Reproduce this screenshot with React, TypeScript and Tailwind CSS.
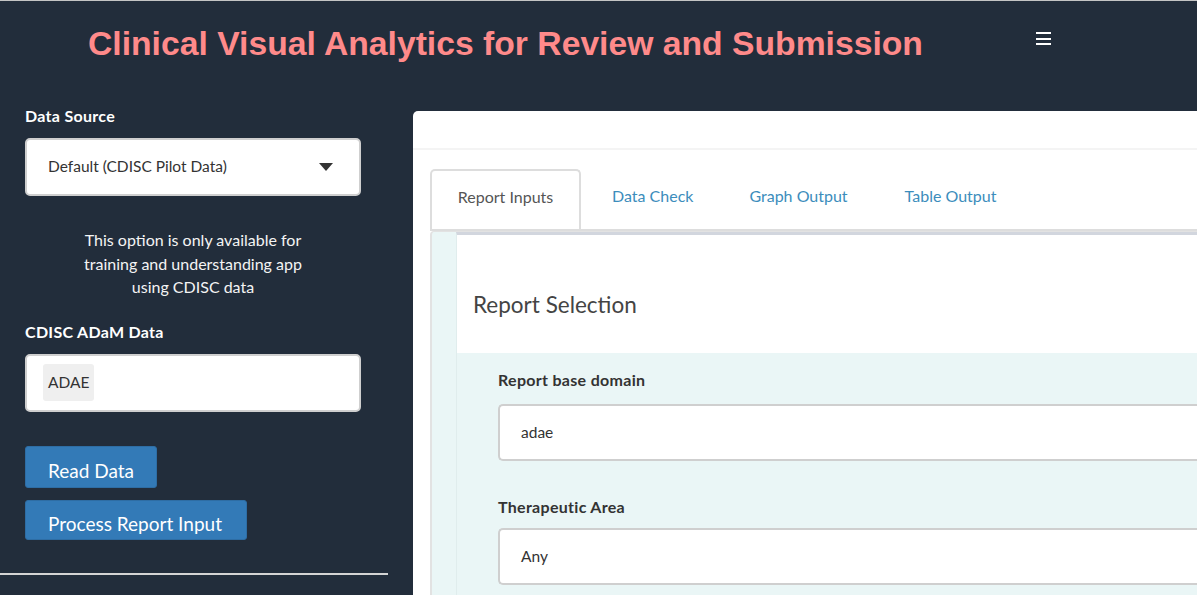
import React from "react";

const sans = "font-['Lato','Noto_Sans',sans-serif]";

export default function App() {
  return (
    <div className={`w-[1197px] h-[595px] overflow-hidden bg-[#222d3b] border-t border-[#c4c4c4] ${sans}`}>
      {/* Header */}
      <div className="h-[89px] flex">
        <div className="w-[1036px] pl-[88px] pt-[22px]">
          <h1 className="font-['Liberation_Sans','Arial',sans-serif] font-bold text-[33.7px] leading-[40px] text-[#ff8a8a] whitespace-nowrap">
            Clinical Visual Analytics for Review and Submission
          </h1>
        </div>
        <div className="pt-[31px] flex flex-col gap-[3.5px]">
          <div className="h-[2px] w-[15px] bg-white" />
          <div className="h-[2px] w-[15px] bg-white" />
          <div className="h-[2px] w-[15px] bg-white" />
        </div>
      </div>

      {/* Body */}
      <div className="flex">
        {/* Sidebar */}
        <div className="w-[388px] shrink-0 flex flex-col">
          <div className="px-[25px] pt-[16px]">
            <div className="text-white font-bold text-[16px] tracking-[0.3px] leading-[20px]">Data Source</div>
            <div className="mt-[12px] h-[58px] w-[336px] bg-white rounded-[5px] border-2 border-[#cfcfcf] flex items-center justify-between pl-[21px] pr-[26px]">
              <span className="text-[15.5px] text-[#333]">Default (CDISC Pilot Data)</span>
              <svg width="14" height="8" viewBox="0 0 14 8">
                <path d="M0 0 L14 0 L7 8 Z" fill="#333" />
              </svg>
            </div>
            <div className="mt-[32px] w-[336px] text-center text-[16px] leading-[23.5px] text-[#f4f4f4]">
              This option is only available for
              <br />
              training and understanding app
              <br />
              using CDISC data
            </div>
            <div className="mt-[23px] text-white font-bold text-[16px] tracking-[0.3px] leading-[20px]">CDISC ADaM Data</div>
            <div className="mt-[12px] h-[58px] w-[336px] bg-white rounded-[5px] border-2 border-[#cfcfcf] flex items-center pl-[16px]">
              <span className="h-[37px] px-[5px] flex items-center bg-[#efefef] rounded-[3px] text-[15.5px] text-[#333]">ADAE</span>
            </div>
            <button className="mt-[34px] block h-[42px] w-[132px] bg-[#337ab7] border border-[#2e6da4] rounded-[3px] text-white text-[19px] text-left pl-[22px] pt-[10px]">
              Read Data
            </button>
            <button className="mt-[12px] block h-[40px] w-[222px] bg-[#337ab7] border border-[#2e6da4] rounded-[3px] text-white text-[19px] text-left pl-[22px] pt-[9px]">
              Process Report Input
            </button>
          </div>
          <div className="mt-[33px] h-[2px] w-[388px] bg-[#d4d4d4]" />
        </div>

        {/* Main */}
        <div className="flex-1 pl-[25px] pt-[21px]">
          <div className="bg-white rounded-tl-[5px] h-[500px]">
            <div className="h-[39px] border-b-2 border-[#f4f4f4]" />
            <div className="pl-[17px] pt-[19px]">
              {/* Tabs */}
              <div className="flex items-end border-b-2 border-[#dddddd]">
                <div className="h-[60px] w-[151px] pb-[6px] border-2 border-b-0 border-[#dddddd] rounded-t-[5px] flex items-center justify-center text-[16px] text-[#555]">
                  Report Inputs
                </div>
                <div className="h-[60px] pb-[6px] pl-[31px] pr-[28px] flex items-center text-[16px] text-[#3c8dbc]">Data Check</div>
                <div className="h-[60px] pb-[6px] px-[28px] flex items-center text-[16px] text-[#3c8dbc]">Graph Output</div>
                <div className="h-[60px] pb-[6px] pl-[29px] pr-[28px] flex items-center text-[16px] text-[#3c8dbc]">Table Output</div>
              </div>
              {/* Tab content */}
              <div className="bg-[#eaf6f6] border-l-2 border-t border-[#e2e2e2] rounded-tl-[4px] pl-[24px] h-[400px]">
                <div className="border-l border-[#e0eded] border-t-[3px] border-t-[#d2d6de] h-full">
                  <div className="bg-white h-[118px] pl-[16px] pt-[56px]">
                    <div className="text-[22.5px] leading-[28px] text-[#444]">Report Selection</div>
                  </div>
                  <div className="pl-[41px] pt-[17px]">
                    <div className="font-bold text-[16px] tracking-[0.3px] leading-[20px] text-[#333]">Report base domain</div>
                    <div className="mt-[14px] h-[57px] bg-white rounded-l-[5px] border-2 border-r-0 border-[#cfcfcf] flex items-center pl-[21px] text-[15.5px] text-[#333]">
                      adae
                    </div>
                    <div className="mt-[36px] font-bold text-[16px] tracking-[0.3px] leading-[20px] text-[#333]">Therapeutic Area</div>
                    <div className="mt-[11px] h-[57px] bg-white rounded-l-[5px] border-2 border-r-0 border-[#cfcfcf] flex items-center pl-[21px] text-[15.5px] text-[#333]">
                      Any
                    </div>
                  </div>
                </div>
              </div>
            </div>
          </div>
        </div>
      </div>
    </div>
  );
}
